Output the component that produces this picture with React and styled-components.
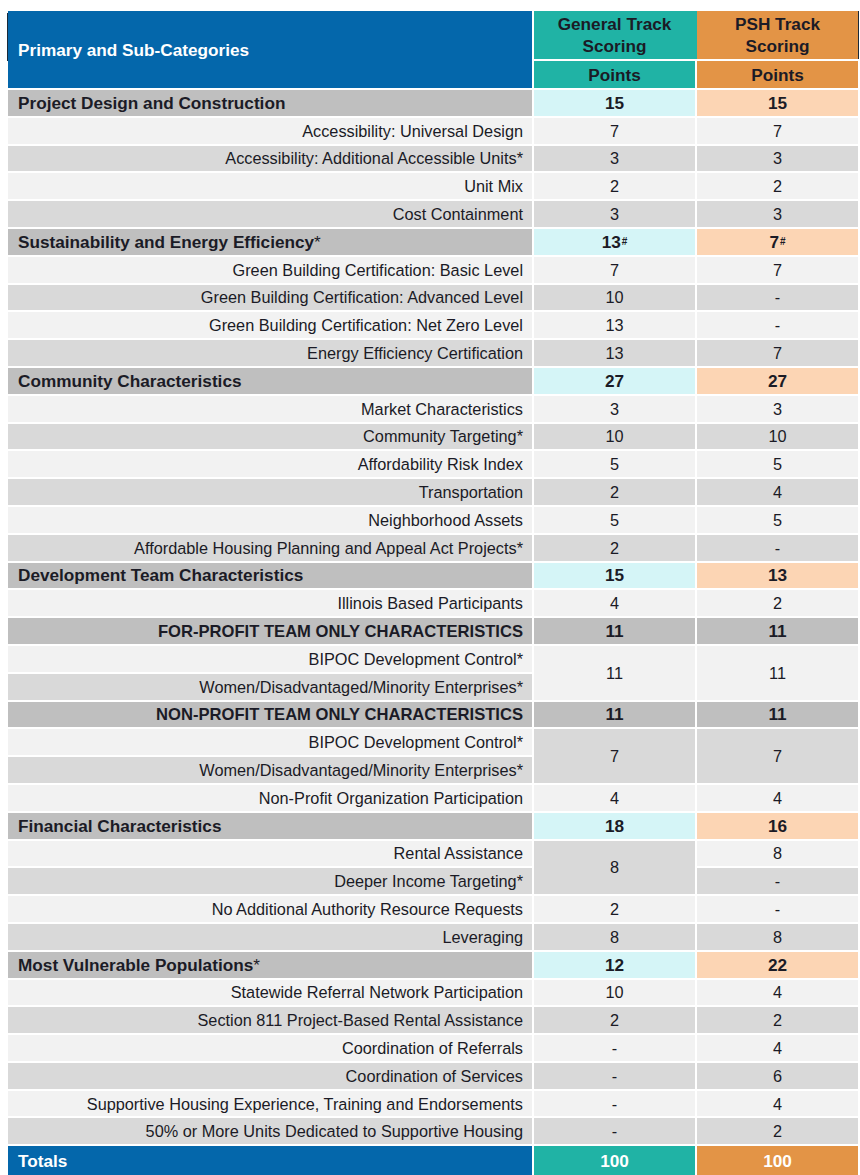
import React from "react";
import styled, { createGlobalStyle } from "styled-components";

const C = {
  blue: "#0467ab",
  teal: "#20b3a5",
  orange: "#e39446",
  cyan: "#d5f5f7",
  peach: "#fcd5b4",
  grey: "#bfbfbf",
  light: "#f2f2f2",
  dark: "#d9d9d9",
  text: "#1b1b26",
};

const Global = createGlobalStyle`
  html, body { margin: 0; padding: 0; background: #fff; }
  body { padding: 11px 0 0 8px; font-family: "Liberation Sans", Arial, sans-serif; }
`;

const Table = styled.div`
  display: grid;
  grid-template-columns: 524px 161px 161px;
  grid-template-rows: 48px 27px repeat(38, 25.8px) 30px;
  gap: 2px;
  width: 850px;
  color: ${C.text};
`;

const Cell = styled.div`
  grid-column: ${(p) => p.$col};
  grid-row: ${(p) => (p.$span ? `span ${p.$span}` : "auto")};
  background: ${(p) => p.$bg};
  display: flex;
  align-items: center;
  white-space: nowrap;
  box-sizing: border-box;
  padding-top: 1px;
`;

const HeadLabel = styled(Cell)`
  grid-row: span 2;
  padding-left: 10px;
  color: #fff;
  font-weight: 700;
  font-size: 17.2px;
  position: relative;
  &::before {
    content: "";
    position: absolute;
    left: -1px;
    top: 2px;
    width: 1px;
    height: 48px;
    background: #1b2b3a;
  }
`;

const TrackHead = styled(Cell)`
  justify-content: center;
  text-align: center;
  white-space: normal;
  font-weight: 700;
  font-size: 17.2px;
  line-height: 21.5px;
  padding-top: 1px;
  box-shadow: ${(p) => (p.$fill ? `2px 0 0 0 ${p.$bg}` : "1px 0 0 0 #1b2b3a")};
`;

const PointsHead = styled(Cell)`
  justify-content: center;
  font-weight: 700;
  font-size: 17.2px;
`;

const CategoryLabel = styled(Cell)`
  padding-left: 10px;
  font-weight: 700;
  font-size: 17.2px;
`;

const SubLabel = styled(Cell)`
  justify-content: flex-end;
  padding-right: 9px;
  font-size: 16.3px;
`;

const SubHeadLabel = styled(Cell)`
  justify-content: flex-end;
  padding-right: 9px;
  font-weight: 700;
  font-size: 16.6px;
`;

const Points = styled(Cell)`
  justify-content: center;
  font-weight: ${(p) => (p.$bold ? 700 : 400)};
  font-size: ${(p) => (p.$bold ? "17.2px" : "16.3px")};
  color: ${(p) => p.$color || C.text};
`;

const TotalLabel = styled(Cell)`
  padding-left: 10px;
  color: #fff;
  font-weight: 700;
  font-size: 17.2px;
`;

const Star = styled.span`
  font-weight: 400;
`;

const Sup = styled.sup`
  font-size: 10px;
  line-height: 0;
  vertical-align: 5px;
  margin-left: 1px;
`;

function Label({ text }) {
  if (text.endsWith("*")) {
    return (
      <>
        {text.slice(0, -1)}
        <Star>*</Star>
      </>
    );
  }
  return text;
}

function Num({ v }) {
  if (typeof v === "string" && v.endsWith("#")) {
    return (
      <>
        {v.slice(0, -1)}
        <Sup>#</Sup>
      </>
    );
  }
  return v;
}

const rows = [
  { k: "cat", t: "Project Design and Construction", g: 15, p: 15 },
  { k: "sub", t: "Accessibility: Universal Design", g: 7, p: 7 },
  { k: "sub", t: "Accessibility: Additional Accessible Units*", g: 3, p: 3 },
  { k: "sub", t: "Unit Mix", g: 2, p: 2 },
  { k: "sub", t: "Cost Containment", g: 3, p: 3 },
  { k: "cat", t: "Sustainability and Energy Efficiency*", g: "13#", p: "7#" },
  { k: "sub", t: "Green Building Certification: Basic Level", g: 7, p: 7 },
  { k: "sub", t: "Green Building Certification: Advanced Level", g: 10, p: "-" },
  { k: "sub", t: "Green Building Certification: Net Zero Level", g: 13, p: "-" },
  { k: "sub", t: "Energy Efficiency Certification", g: 13, p: 7 },
  { k: "cat", t: "Community Characteristics", g: 27, p: 27 },
  { k: "sub", t: "Market Characteristics", g: 3, p: 3 },
  { k: "sub", t: "Community Targeting*", g: 10, p: 10 },
  { k: "sub", t: "Affordability Risk Index", g: 5, p: 5 },
  { k: "sub", t: "Transportation", g: 2, p: 4 },
  { k: "sub", t: "Neighborhood Assets", g: 5, p: 5 },
  { k: "sub", t: "Affordable Housing Planning and Appeal Act Projects*", g: 2, p: "-" },
  { k: "cat", t: "Development Team Characteristics", g: 15, p: 13 },
  { k: "sub", t: "Illinois Based Participants", g: 4, p: 2 },
  { k: "subhead", t: "FOR-PROFIT TEAM ONLY CHARACTERISTICS", g: 11, p: 11 },
  {
    k: "pair",
    a: "BIPOC Development Control*",
    b: "Women/Disadvantaged/Minority Enterprises*",
    g: 11,
    p: 11,
    bg: C.light,
  },
  { k: "subhead", t: "NON-PROFIT TEAM ONLY CHARACTERISTICS", g: 11, p: 11 },
  {
    k: "pair",
    a: "BIPOC Development Control*",
    b: "Women/Disadvantaged/Minority Enterprises*",
    g: 7,
    p: 7,
    bg: C.dark,
  },
  { k: "sub", t: "Non-Profit Organization Participation", g: 4, p: 4, reset: true },
  { k: "cat", t: "Financial Characteristics", g: 18, p: 16 },
  { k: "fin", a: "Rental Assistance", b: "Deeper Income Targeting*", g: 8, pa: 8, pb: "-" },
  { k: "sub", t: "No Additional Authority Resource Requests", g: 2, p: "-", reset: true },
  { k: "sub", t: "Leveraging", g: 8, p: 8 },
  { k: "cat", t: "Most Vulnerable Populations*", g: 12, p: 22 },
  { k: "sub", t: "Statewide Referral Network Participation", g: 10, p: 4 },
  { k: "sub", t: "Section 811 Project-Based Rental Assistance", g: 2, p: 2 },
  { k: "sub", t: "Coordination of Referrals", g: "-", p: 4 },
  { k: "sub", t: "Coordination of Services", g: "-", p: 6 },
  { k: "sub", t: "Supportive Housing Experience, Training and Endorsements", g: "-", p: 4 },
  { k: "sub", t: "50% or More Units Dedicated to Supportive Housing", g: "-", p: 2 },
];

function Body() {
  const out = [];
  let idx = 0;
  rows.forEach((r, i) => {
    const key = `r${i}`;
    if (r.reset) idx = 0;
    if (r.k === "cat") {
      idx = 0;
      out.push(
        <CategoryLabel key={key + "l"} $col={1} $bg={C.grey}>
          <Label text={r.t} />
        </CategoryLabel>,
        <Points key={key + "g"} $col={2} $bg={C.cyan} $bold>
          <Num v={r.g} />
        </Points>,
        <Points key={key + "p"} $col={3} $bg={C.peach} $bold>
          <Num v={r.p} />
        </Points>
      );
    } else if (r.k === "subhead") {
      idx = 0;
      out.push(
        <SubHeadLabel key={key + "l"} $col={1} $bg={C.grey}>
          {r.t}
        </SubHeadLabel>,
        <Points key={key + "g"} $col={2} $bg={C.grey} $bold>
          {r.g}
        </Points>,
        <Points key={key + "p"} $col={3} $bg={C.grey} $bold>
          {r.p}
        </Points>
      );
    } else if (r.k === "sub") {
      const bg = idx % 2 === 0 ? C.light : C.dark;
      idx++;
      out.push(
        <SubLabel key={key + "l"} $col={1} $bg={bg}>
          <Label text={r.t} />
        </SubLabel>,
        <Points key={key + "g"} $col={2} $bg={bg}>
          {r.g}
        </Points>,
        <Points key={key + "p"} $col={3} $bg={bg}>
          {r.p}
        </Points>
      );
    } else if (r.k === "pair") {
      out.push(
        <SubLabel key={key + "a"} $col={1} $bg={C.light}>
          <Label text={r.a} />
        </SubLabel>,
        <Points key={key + "g"} $col={2} $span={2} $bg={r.bg}>
          {r.g}
        </Points>,
        <Points key={key + "p"} $col={3} $span={2} $bg={r.bg}>
          {r.p}
        </Points>,
        <SubLabel key={key + "b"} $col={1} $bg={C.dark}>
          <Label text={r.b} />
        </SubLabel>
      );
      idx += 2;
    } else if (r.k === "fin") {
      out.push(
        <SubLabel key={key + "a"} $col={1} $bg={C.light}>
          <Label text={r.a} />
        </SubLabel>,
        <Points key={key + "g"} $col={2} $span={2} $bg={C.dark}>
          {r.g}
        </Points>,
        <Points key={key + "pa"} $col={3} $bg={C.light}>
          {r.pa}
        </Points>,
        <SubLabel key={key + "b"} $col={1} $bg={C.dark}>
          <Label text={r.b} />
        </SubLabel>,
        <Points key={key + "pb"} $col={3} $bg={C.dark}>
          {r.pb}
        </Points>
      );
      idx += 2;
    }
  });
  return out;
}

export default function App() {
  return (
    <>
      <Global />
      <Table>
        <HeadLabel $col={1} $bg={C.blue}>
          Primary and Sub-Categories
        </HeadLabel>
        <TrackHead $col={2} $bg={C.teal} $fill>
          General Track
          <br />
          Scoring
        </TrackHead>
        <TrackHead $col={3} $bg={C.orange}>
          PSH Track
          <br />
          Scoring
        </TrackHead>
        <PointsHead $col={2} $bg={C.teal}>
          Points
        </PointsHead>
        <PointsHead $col={3} $bg={C.orange}>
          Points
        </PointsHead>
        <Body />
        <TotalLabel $col={1} $bg={C.blue}>
          Totals
        </TotalLabel>
        <Points $col={2} $bg={C.teal} $bold $color="#fff">
          100
        </Points>
        <Points $col={3} $bg={C.orange} $bold $color="#fff">
          100
        </Points>
      </Table>
    </>
  );
}
